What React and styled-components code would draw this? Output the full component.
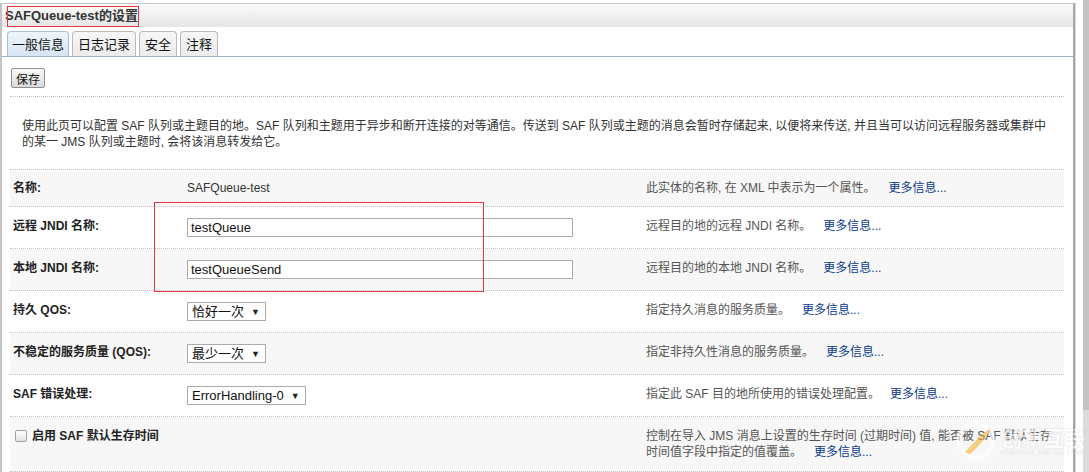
import React from "react";
import styled, { createGlobalStyle, css } from "styled-components";

const GlobalStyle = createGlobalStyle`
  html, body {
    margin: 0;
    padding: 0;
    background: #ffffff;
  }
  body {
    font-family: "Liberation Sans", "Noto Sans CJK SC", sans-serif;
    font-size: 12px;
    color: #222;
  }
`;

const rows = [
  {
    label: "名称:",
    kind: "text",
    value: "SAFQueue-test",
    desc: "此实体的名称, 在 XML 中表示为一个属性。",
    gap: 13,
  },
  {
    label: "远程 JNDI 名称:",
    kind: "input",
    value: "testQueue",
    desc: "远程目的地的远程 JNDI 名称。",
    gap: 12,
  },
  {
    label: "本地 JNDI 名称:",
    kind: "input",
    value: "testQueueSend",
    desc: "远程目的地的本地 JNDI 名称。",
    gap: 12,
  },
  {
    label: "持久 QOS:",
    kind: "select",
    value: "恰好一次",
    desc: "指定持久消息的服务质量。",
    gap: 12,
  },
  {
    label: "不稳定的服务质量 (QOS):",
    kind: "select",
    value: "最少一次",
    desc: "指定非持久性消息的服务质量。",
    gap: 12,
  },
  {
    label: "SAF 错误处理:",
    kind: "select",
    value: "ErrorHandling-0",
    desc: "指定此 SAF 目的地所使用的错误处理配置。",
    gap: 10,
  },
];

const App = () => {
  return (
    <>
      <GlobalStyle />
      <Page>
        <Panel>
          <TitleBar>
            SAFQueue-test的设置
            <MarkBox $left={5} $top={2} $width={132} $height={21} />
          </TitleBar>
          <TabBar>
            <Tab $active>一般信息</Tab>
            <Tab>日志记录</Tab>
            <Tab>安全</Tab>
            <Tab>注释</Tab>
          </TabBar>
          <Content>
            <SaveButton>保存</SaveButton>
            <Rule />
            <Intro>
              使用此页可以配置 SAF 队列或主题目的地。SAF 队列和主题用于异步和断开连接的对等通信。传送到 SAF
              队列或主题的消息会暂时存储起来, 以便将来传送, 并且当可以访问远程服务器或集群中
              <br />
              的某一 JMS 队列或主题时, 会将该消息转发给它。
            </Intro>
            <Table>
              <MarkBox $left={144} $top={32} $width={330} $height={90} />
              {rows.map((row, i) => (
                <Row key={row.label} $shaded={i % 2 === 0} $pad={row.kind === "text" ? 10 : 11}>
                  <Label>{row.label}</Label>
                  <Value>
                    {row.kind === "text" && <PlainValue>{row.value}</PlainValue>}
                    {row.kind === "input" && <TextField>{row.value}</TextField>}
                    {row.kind === "select" && (
                      <SelectBox>
                        {row.value}
                        <Arrow>▼</Arrow>
                      </SelectBox>
                    )}
                  </Value>
                  <Desc>
                    {row.desc}
                    <MoreLink $gap={row.gap}>更多信息...</MoreLink>
                  </Desc>
                </Row>
              ))}
              <Row $shaded $pad={11}>
                <Label>
                  <CheckBox />
                  启用 SAF 默认生存时间
                </Label>
                <Value />
                <Desc>
                  控制在导入 JMS 消息上设置的生存时间 (过期时间) 值, 能否被 SAF 默认生存
                  <br />
                  时间值字段中指定的值覆盖。
                  <MoreLink $gap={12}>更多信息...</MoreLink>
                </Desc>
              </Row>
            </Table>
          </Content>
        </Panel>
        <ScrollTrack>
          <ScrollThumb />
        </ScrollTrack>
        <Watermark>
          <svg width="42" height="42" viewBox="0 0 42 42">
            <circle cx="21" cy="21" r="17" fill="none" stroke="#ffffff" strokeWidth="5" opacity="0.9" />
            <path d="M10 32 C18 24 25 15 36 8 C30 19 23 27 15 34 Z" fill="#f2b12d" opacity="0.85" />
          </svg>
          <WatermarkText>
            <WatermarkTitle>创新互联</WatermarkTitle>
            <WatermarkSub>CHUANG XIN HU LIAN</WatermarkSub>
          </WatermarkText>
        </Watermark>
      </Page>
    </>
  );
};

const Page = styled.div`
  position: relative;
  display: flex;
  align-items: flex-start;
  height: 472px;
  padding-top: 3px;
  box-sizing: border-box;
  overflow: hidden;
`;

const Panel = styled.div`
  position: relative;
  flex: 0 0 1075px;
  height: 480px;
  box-sizing: border-box;
  border-top: 1px solid #c6c6c6;
  border-left: 2px solid #c3c3c3;
  border-right: 2px solid #a7a7a7;
  box-shadow: 1px 0 0 #d8d8d8;
`;

const MarkBox = styled.div`
  position: absolute;
  left: ${({ $left }) => $left}px;
  top: ${({ $top }) => $top}px;
  width: ${({ $width }) => $width}px;
  height: ${({ $height }) => $height}px;
  border: 1px solid #e8383d;
  box-sizing: border-box;
  pointer-events: none;
`;

const TitleBar = styled.div`
  position: relative;
  height: 23px;
  line-height: 23px;
  padding-left: 3px;
  background: linear-gradient(#fbfbfb, #e4e5e5);
  font-size: 13px;
  font-weight: bold;
  color: #333;
`;

const TabBar = styled.div`
  display: flex;
  gap: 3px;
  margin-top: 4px;
  padding-left: 5px;
  border-bottom: 1px solid #9cb4ca;
`;

const Tab = styled.div`
  height: 25px;
  line-height: 25px;
  padding: 0 5px;
  box-sizing: border-box;
  font-size: 13px;
  color: #111;
  border: 1px solid #b9b9b9;
  border-bottom: none;
  border-radius: 4px 4px 0 0;
  background: linear-gradient(#f6f6f6, #ececec);

  ${({ $active }) =>
    $active &&
    css`
      padding: 0 4px;
      border-color: #a8c0d6;
      background: linear-gradient(#eef5fb, #d6e5f2);
    `}
`;

const Content = styled.div`
  padding: 11px 9px 0 8px;
`;

const SaveButton = styled.button`
  display: block;
  margin-left: 1px;
  width: 34px;
  height: 20px;
  padding: 0;
  font-family: inherit;
  font-size: 12px;
  color: #111;
  border: 1px solid #8e8e8e;
  border-radius: 2px;
  background: linear-gradient(#fafafa, #dadada);
`;

const Rule = styled.div`
  margin-top: 8px;
  border-top: 1px dotted #bdbdbd;
`;

const Intro = styled.p`
  margin: 0;
  padding: 21px 0 19px 12px;
  line-height: 16px;
  font-size: 12px;
  color: #333;
  white-space: nowrap;
`;

const Table = styled.div`
  position: relative;
  border-top: 1px dotted #c3c3c3;
`;

const Row = styled.div`
  display: flex;
  align-items: flex-start;
  padding: ${({ $pad }) => $pad}px 0;
  border-bottom: 1px dotted #c3c3c3;
  background: ${({ $shaded }) => ($shaded ? "#f7f7f7" : "#ffffff")};
`;

const Label = styled.div`
  display: flex;
  align-items: center;
  flex: 0 0 174px;
  padding-left: 3px;
  line-height: 16px;
  font-size: 12px;
  font-weight: bold;
  color: #222;
  white-space: nowrap;
`;

const Value = styled.div`
  flex: 0 0 459px;
  line-height: 16px;
`;

const PlainValue = styled.span`
  font-size: 12px;
  color: #333;
`;

const TextField = styled.div`
  width: 386px;
  height: 19px;
  box-sizing: border-box;
  padding-left: 3px;
  line-height: 17px;
  font-size: 13px;
  color: #111;
  border: 1px solid #ababab;
  background: #ffffff;
`;

const SelectBox = styled.div`
  display: inline-flex;
  align-items: center;
  gap: 7px;
  height: 19px;
  box-sizing: border-box;
  padding: 0 5px 0 4px;
  font-size: 13px;
  color: #111;
  border: 1px solid #ababab;
  background: #ffffff;
`;

const Arrow = styled.span`
  font-size: 9px;
  color: #222;
`;

const Desc = styled.div`
  flex: 1;
  line-height: 16px;
  font-size: 12px;
  color: #555;
  white-space: nowrap;
`;

const MoreLink = styled.a`
  margin-left: ${({ $gap }) => $gap}px;
  color: #0a3a8c;
  text-decoration: none;
  cursor: pointer;
`;

const CheckBox = styled.span`
  width: 12px;
  height: 12px;
  margin: 0 5px 0 2px;
  box-sizing: border-box;
  border: 1px solid #a2a2a2;
  border-radius: 2px;
  background: linear-gradient(#ffffff, #e3e3e3);
`;

const ScrollTrack = styled.div`
  flex: 0 0 6px;
  height: 472px;
  margin-left: 8px;
  margin-top: -3px;
  background: #dcdcdc;
`;

const ScrollThumb = styled.div`
  height: 410px;
  background: #c4c4c4;
`;

const Watermark = styled.div`
  position: absolute;
  left: 955px;
  top: 420px;
  display: flex;
  align-items: center;
  gap: 4px;
  opacity: 0.7;
  pointer-events: none;
`;

const WatermarkText = styled.div`
  display: flex;
  flex-direction: column;
  align-items: flex-start;
`;

const WatermarkTitle = styled.span`
  font-family: "Noto Sans CJK SC", sans-serif;
  font-size: 21px;
  font-weight: bold;
  line-height: 23px;
  color: #ffffff;
  text-shadow: 0 0 2px rgba(0, 0, 0, 0.2);
`;

const WatermarkSub = styled.span`
  font-size: 7px;
  letter-spacing: 0.6px;
  color: #ffffff;
  text-shadow: 0 0 1px rgba(0, 0, 0, 0.3);
`;

export default App;
